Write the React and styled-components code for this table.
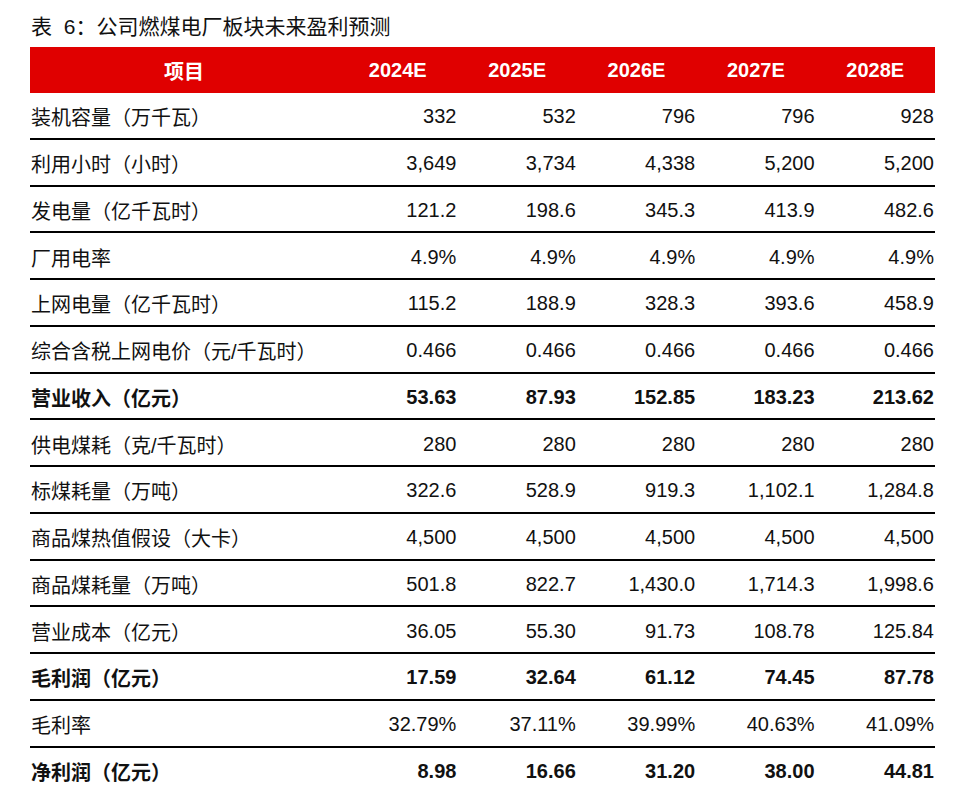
import React from "react";
import styled, { createGlobalStyle } from "styled-components";

const Global = createGlobalStyle`
  html, body { margin: 0; padding: 0; background: #fff; }
  body { font-family: "Liberation Sans", "Noto Sans CJK SC", sans-serif; color: #111; }
`;

const Page = styled.div`
  padding: 12px 32px 0 30px;
  width: 905px;
`;

const Title = styled.div`
  font-size: 21px;
  line-height: 30px;
  height: 30px;
  margin-bottom: 5px;
  padding-left: 1px;
  white-space: pre;
  word-spacing: 6px;
`;

const cols = "308px repeat(5, 119.4px)";

const Header = styled.div`
  display: grid;
  grid-template-columns: ${cols};
  height: 46px;
  background: #e00000;
  color: #fff;
  font-weight: bold;
  font-size: 20px;
  align-items: center;
`;

const HeadCell = styled.div`
  text-align: center;
`;

const Row = styled.div`
  display: grid;
  grid-template-columns: ${cols};
  height: 44.75px;
  box-sizing: content-box;
  align-items: center;
  font-size: 20px;
  font-weight: ${(p) => (p.$bold ? "bold" : "normal")};
  border-bottom: ${(p) => (p.$last ? "none" : "2px solid #000")};
`;

const Label = styled.div`
  padding: 3px 0 0 1px;
  white-space: nowrap;
`;

const Value = styled.div`
  text-align: right;
  padding: 3px 1px 0 0;
`;

const rows = [
  ["装机容量（万千瓦）", ["332", "532", "796", "796", "928"]],
  ["利用小时（小时）", ["3,649", "3,734", "4,338", "5,200", "5,200"]],
  ["发电量（亿千瓦时）", ["121.2", "198.6", "345.3", "413.9", "482.6"]],
  ["厂用电率", ["4.9%", "4.9%", "4.9%", "4.9%", "4.9%"]],
  ["上网电量（亿千瓦时）", ["115.2", "188.9", "328.3", "393.6", "458.9"]],
  ["综合含税上网电价（元/千瓦时）", ["0.466", "0.466", "0.466", "0.466", "0.466"]],
  ["营业收入（亿元）", ["53.63", "87.93", "152.85", "183.23", "213.62"], true],
  ["供电煤耗（克/千瓦时）", ["280", "280", "280", "280", "280"]],
  ["标煤耗量（万吨）", ["322.6", "528.9", "919.3", "1,102.1", "1,284.8"]],
  ["商品煤热值假设（大卡）", ["4,500", "4,500", "4,500", "4,500", "4,500"]],
  ["商品煤耗量（万吨）", ["501.8", "822.7", "1,430.0", "1,714.3", "1,998.6"]],
  ["营业成本（亿元）", ["36.05", "55.30", "91.73", "108.78", "125.84"]],
  ["毛利润（亿元）", ["17.59", "32.64", "61.12", "74.45", "87.78"], true],
  ["毛利率", ["32.79%", "37.11%", "39.99%", "40.63%", "41.09%"]],
  ["净利润（亿元）", ["8.98", "16.66", "31.20", "38.00", "44.81"], true],
];

export default function App() {
  return (
    <>
      <Global />
      <Page>
        <Title>表 6：公司燃煤电厂板块未来盈利预测</Title>
        <Header>
          <HeadCell>项目</HeadCell>
          {["2024E", "2025E", "2026E", "2027E", "2028E"].map((y) => (
            <HeadCell key={y}>{y}</HeadCell>
          ))}
        </Header>
        {rows.map(([label, vals, bold], i) => (
          <Row key={label} $bold={bold} $last={i === rows.length - 1}>
            <Label>{label}</Label>
            {vals.map((v, j) => (
              <Value key={j}>{v}</Value>
            ))}
          </Row>
        ))}
      </Page>
    </>
  );
}
